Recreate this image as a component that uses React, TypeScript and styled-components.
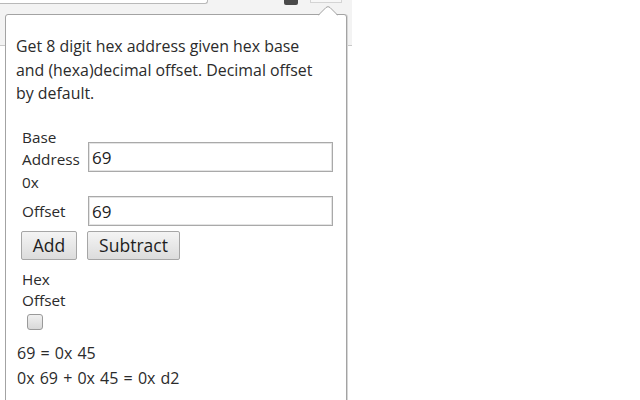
import React from "react";
import styled, { createGlobalStyle } from "styled-components";

const Global = createGlobalStyle`
  html, body { margin: 0; padding: 0; background: #ffffff; }
  body { font-family: "Open Sans", "Noto Sans", sans-serif; color: #2b2b2b; }
`;

const Frame = styled.div`
  position: relative;
  width: 352px;
  height: 400px;
  overflow: hidden;
  background: #ffffff;
`;

const Toolbar = styled.div`
  display: flex;
  align-items: flex-start;
  height: 45px;
  background: #f3f3f3;
  border-bottom: 1px solid #c9c9c9;
`;

const AddressBar = styled.div`
  width: 207px;
  height: 3px;
  background: #ffffff;
  border: 1px solid #b9b9b9;
  border-top: none;
  border-left: none;
  border-bottom-right-radius: 3px;
`;

const ToolIcon = styled.div`
  width: 14px;
  height: 5px;
  margin-left: 76px;
  background: #4a4a4a;
  border-bottom-left-radius: 2px;
  border-bottom-right-radius: 2px;
`;

const ToolButton = styled.div`
  width: 30px;
  height: 2px;
  margin-left: 12px;
  border: 1px solid #d4d4d4;
  border-top: none;
  background: #f7f7f7;
`;

const Popup = styled.div`
  position: absolute;
  left: 5px;
  top: 14px;
  width: 342px;
  height: 400px;
  background: #ffffff;
  border: 1px solid #a3a3a3;
  border-radius: 3px;
  box-shadow: 1px 0 0 #d6d6d6;
  padding: 20px 0 0 10px;
  box-sizing: border-box;
  font-size: 15.5px;
`;

const Arrow = styled.svg`
  position: absolute;
  left: 312px;
  top: -9px;
`;

const Description = styled.p`
  margin: 0;
  width: 310px;
  line-height: 23.5px;
  font-size: 15.9px;
`;

const Form = styled.div`
  display: grid;
  grid-template-columns: 64px 245px;
  column-gap: 2px;
  row-gap: 3px;
  align-items: center;
  margin: 20px 0 0 6px;
`;

const Label = styled.label`
  font-size: 15.3px;
  line-height: 22.5px;
`;

const TextInput = styled.input<{ $lift?: number }>`
  box-sizing: border-box;
  height: 30px;
  width: 245px;
  margin-top: ${(p) => -(p.$lift ?? 0) * 2}px;
  border: 1px solid #a9a9a9;
  box-shadow: inset 0 0 0 1px #e4e4e4;
  padding: 0 3px;
  font-family: "Open Sans", sans-serif;
  font-size: 17px;
  color: #222;
  outline: none;
`;

const Buttons = styled.div`
  display: flex;
  gap: 10px;
  margin: 5px 0 0 5px;
`;

const Button = styled.button<{ $w: number }>`
  box-sizing: border-box;
  width: ${(p) => p.$w}px;
  height: 29px;
  border: 1px solid #a6a6a6;
  border-radius: 2px;
  background: linear-gradient(#f4f4f4, #dcdcdc);
  font-family: "Open Sans", sans-serif;
  font-size: 17.5px;
  font-weight: 500;
  color: #1e1e1e;
  padding: 0;
  line-height: 27px;
`;

const HexBlock = styled.div`
  display: flex;
  flex-direction: column;
  margin: 9px 0 0 6px;
`;

const SmallLabel = styled.span`
  font-size: 15.3px;
  line-height: 21px;
`;

const Check = styled.span`
  display: block;
  width: 14px;
  height: 14px;
  margin: 3px 0 0 5px;
  border: 1px solid #9a9a9a;
  border-radius: 3px;
  background: linear-gradient(#f0f0f0, #d8d8d8);
`;

const Results = styled.div`
  margin-top: 11px;
  margin-left: 1px;
  font-size: 16px;
  line-height: 25px;
  word-spacing: 1px;
`;

export default function App() {
  return (
    <>
      <Global />
      <Frame>
        <Toolbar>
          <AddressBar />
          <ToolIcon />
          <ToolButton />
        </Toolbar>
        <Popup>
          <Arrow width="20" height="10" viewBox="0 0 20 10">
            <path d="M0 10 L8 2 Q10 0 12 2 L20 10 Z" fill="#ffffff" />
            <path d="M0 9.5 L8 1.5 Q10 -0.3 12 1.5 L20 9.5" fill="none" stroke="#a3a3a3" strokeWidth="1" />
          </Arrow>
          <Description>
            Get 8 digit hex address given hex base and (hexa)decimal offset. Decimal offset by default.
          </Description>
          <Form>
            <Label>
              Base
              <br />
              Address
              <br />
              0x
            </Label>
            <TextInput defaultValue="69" $lift={2} />
            <Label>Offset</Label>
            <TextInput defaultValue="69" />
          </Form>
          <Buttons>
            <Button $w={56}>Add</Button>
            <Button $w={93}>Subtract</Button>
          </Buttons>
          <HexBlock>
            <SmallLabel>Hex</SmallLabel>
            <SmallLabel>Offset</SmallLabel>
            <Check />
          </HexBlock>
          <Results>
            <div>69 = 0x 45</div>
            <div>0x 69 + 0x 45 = 0x d2</div>
          </Results>
        </Popup>
      </Frame>
    </>
  );
}
